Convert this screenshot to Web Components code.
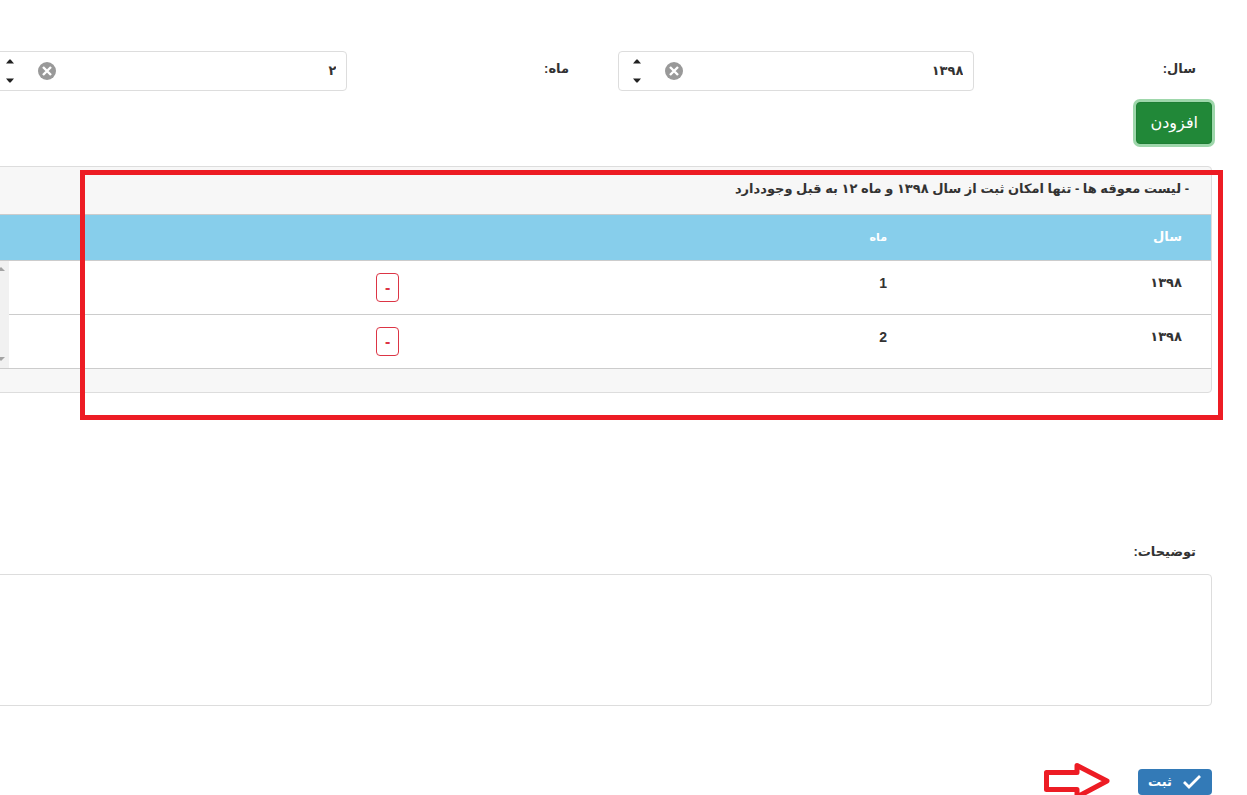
<!DOCTYPE html>
<html lang="fa" dir="rtl">
<head>
<meta charset="utf-8">
<meta name="viewport" content="width=device-width, initial-scale=1">
<title>لیست معوقه ها</title>
<style>
  body {
    margin: 0;
    overflow: hidden;
    background: #fff;
    color: #333;
    font: 700 13px/20px "Liberation Sans", "DejaVu Sans", sans-serif;
  }
</style>
</head>
<body>
<arrears-form></arrears-form>

<script>
class NumberField extends HTMLElement {
  connectedCallback() {
    this.attachShadow({ mode: 'open' });
    const label = this.getAttribute('label') || '';
    const value = this.getAttribute('value') || '';

    this.shadowRoot.innerHTML = `
      <style>
        :host { display: grid; grid-template-columns: 2fr 3fr; }
        label { padding: 8px 16px; }
        .box {
          display: flex;
          align-items: center;
          box-sizing: border-box;
          height: 40px;
          border: 1px solid #ddd;
          border-radius: 4px;
          min-width: 0;
        }
        input {
          flex: 1;
          min-width: 0;
          border: 0;
          outline: 0;
          padding: 0 10px;
          background: none;
          color: inherit;
          font: inherit;
        }
        button { border: 0; padding: 0; background: none; cursor: pointer; display: flex; }
        .clear { margin-inline-end: 24px; }
        .spin { display: flex; flex-direction: column; gap: 14px; margin-inline-end: 14px; }
        svg { display: block; }
      </style>
      <label for="value">${label}</label>
      <div class="box">
        <input id="value" type="text" inputmode="numeric" value="${value}">
        <button class="clear" type="button" aria-label="پاک کردن">
          <svg width="18" height="18" viewBox="0 0 18 18">
            <circle cx="9" cy="9" r="9" fill="#999"/>
            <path d="M5 5l8 8M13 5l-8 8" stroke="#fff" stroke-width="2.4"/>
          </svg>
        </button>
        <div class="spin">
          <button class="up" type="button" aria-label="افزایش">
            <svg width="8" height="5" viewBox="0 0 8 5"><path d="M0 4.5L3.4.5h1.2L8 4.5z" fill="#222"/></svg>
          </button>
          <button class="down" type="button" aria-label="کاهش">
            <svg width="8" height="5" viewBox="0 0 8 5"><path d="M0 .5h8L4.6 4.5H3.4z" fill="#222"/></svg>
          </button>
        </div>
      </div>`;

    const input = this.shadowRoot.querySelector('input');
    const step = n => {
      const latin = input.value.replace(/[۰-۹]/g, d => '۰۱۲۳۴۵۶۷۸۹'.indexOf(d));
      const next = (parseInt(latin, 10) || 0) + n;
      input.value = String(next).replace(/\d/g, d => '۰۱۲۳۴۵۶۷۸۹'[d]);
    };
    this.shadowRoot.querySelector('.clear').addEventListener('click', () => { input.value = ''; });
    this.shadowRoot.querySelector('.up').addEventListener('click', () => step(1));
    this.shadowRoot.querySelector('.down').addEventListener('click', () => step(-1));
  }
}

class ActionButton extends HTMLElement {
  connectedCallback() {
    this.attachShadow({ mode: 'open' });
    this.shadowRoot.innerHTML = `
      <style>
        :host { display: inline-flex; }
        button {
          display: flex;
          align-items: center;
          gap: 10px;
          box-sizing: border-box;
          cursor: pointer;
          font-family: inherit;
          font-size: 16px;
          line-height: 20px;
          color: #fff;
          border-radius: 4px;
        }
        :host([kind="add"]) button {
          height: 42px;
          padding: 0 13px;
          background: #218838;
          border: 1px solid #1e7e34;
          box-shadow: 0 0 0 3px rgba(40, 167, 69, 0.45);
        }
        :host([kind="submit"]) button {
          height: 26px;
          padding: 0 10px;
          font-size: 13px;
          font-weight: 700;
          background: #337ab7;
          border: 0;
        }
        :host([kind="remove"]) button {
          height: 29px;
          padding: 0 8px;
          font-weight: 700;
          color: #dc3545;
          background: #fff;
          border: 1px solid #dc3545;
        }
      </style>
      <button type="button"><slot name="icon"></slot><slot></slot></button>`;
  }
}

class ArrearsTable extends HTMLElement {
  connectedCallback() {
    this.attachShadow({ mode: 'open' });
    const rows = [['۱۳۹۸', '1'], ['۱۳۹۸', '2']];

    this.shadowRoot.innerHTML = `
      <style>
        :host {
          display: block;
          border: 1px solid #ddd;
          border-radius: 4px;
          background: #f7f7f7;
        }
        .title { padding: 12px 22px 15px; }
        table {
          width: 100%;
          border-collapse: collapse;
          table-layout: fixed;
          border-top: 1px solid #ccc;
        }
        th, td { padding: 12px 29px; text-align: start; vertical-align: top; }
        th { background: #87ceeb; color: #fff; border-bottom: 1px solid #ccc; padding-bottom: 13px; }
        td { background: #fff; border-bottom: 1px solid #ccc; }
        td.month { font-size: 14px; }
        th.month { font-size: 11px; }
        .year { width: 237px; }
        .month { width: 40%; box-sizing: border-box; }
        td action-button { display: flex; }
        .bar { width: 17px; padding: 0; }
        td.bar { background: #f1f1f1; }
        .bar div {
          display: flex;
          flex-direction: column;
          align-items: center;
          justify-content: space-between;
          height: 94px;
          padding: 6px 0;
        }
        .foot { height: 23px; }
      </style>
      <div class="title"><slot></slot></div>
      <table>
        <thead>
          <tr>
            <th class="year" scope="col">سال</th>
            <th class="month" scope="col">ماه</th>
            <th></th>
            <th class="bar"></th>
          </tr>
        </thead>
        <tbody>
          ${rows.map(([year, month], i) => `
          <tr>
            <td>${year}</td>
            <td class="month">${month}</td>
            <td><action-button kind="remove">-</action-button></td>
            ${i === 0 ? `<td class="bar" rowspan="${rows.length}"><div>
              <svg width="8" height="4" viewBox="0 0 8 4"><path d="M0 4l4-4 4 4z" fill="#a3a3a3"/></svg>
              <svg width="8" height="4" viewBox="0 0 8 4"><path d="M0 0h8L4 4z" fill="#a3a3a3"/></svg>
            </div></td>` : ''}
          </tr>`).join('')}
        </tbody>
      </table>
      <div class="foot"></div>`;
  }
}

class NoteField extends HTMLElement {
  connectedCallback() {
    this.attachShadow({ mode: 'open' });
    this.shadowRoot.innerHTML = `
      <style>
        :host { display: block; }
        label { display: block; padding: 0 16px 12px; }
        textarea {
          display: block;
          box-sizing: border-box;
          width: 100%;
          height: 132px;
          padding: 8px 10px;
          border: 1px solid #ddd;
          border-radius: 4px;
          resize: none;
          font: inherit;
          color: inherit;
        }
      </style>
      <label for="note">${this.getAttribute('label') || ''}</label>
      <textarea id="note"></textarea>`;
  }
}

// Red frame drawn over whatever is slotted in
class MarkedArea extends HTMLElement {
  connectedCallback() {
    this.attachShadow({ mode: 'open' });
    this.shadowRoot.innerHTML = `
      <style>
        :host { display: block; position: relative; }
        .frame {
          position: absolute;
          inset: 4px -11px -27px 89px;
          border: 5px solid #ed1c24;
          pointer-events: none;
        }
      </style>
      <slot></slot>
      <div class="frame"></div>`;
  }
}

class ArrearsForm extends HTMLElement {
  connectedCallback() {
    this.attachShadow({ mode: 'open' });
    this.shadowRoot.innerHTML = `
      <style>
        :host { display: block; margin-inline: 35px -9px; padding-top: 51px; }
        .fields { display: grid; grid-template-columns: 1fr 1fr; gap: 33px; }
        .add { display: flex; margin: 11px 0 22px; }
        note-field { margin-top: 149px; }
        .actions { display: flex; align-items: center; gap: 28px; height: 26px; margin-top: 63px; }
        svg { display: block; }
      </style>
      <div class="fields">
        <number-field label="سال:" value="۱۳۹۸"></number-field>
        <number-field label="ماه:" value="۲"></number-field>
      </div>
      <div class="add"><action-button kind="add">افزودن</action-button></div>
      <marked-area>
        <arrears-table>- لیست معوقه ها - تنها امکان ثبت از سال ۱۳۹۸ و ماه ۱۲ به قبل وجوددارد</arrears-table>
      </marked-area>
      <note-field label="توضیحات:"></note-field>
      <div class="actions">
        <action-button kind="submit">
          <svg slot="icon" width="20" height="16" viewBox="0 0 20 16"><path d="M2 8l5 5L18 2" fill="none" stroke="#fff" stroke-width="2.8"/></svg>
          ثبت
        </action-button>
        <svg width="66" height="38" viewBox="0 0 66 38">
          <path d="M2.5 9.5H33V2.500L63 18 33 34V26.500H2.500z" fill="#fff" stroke="#ed1c24" stroke-width="5" stroke-linejoin="round"/>
        </svg>
      </div>`;
  }
}

customElements.define('number-field', NumberField);
customElements.define('action-button', ActionButton);
customElements.define('arrears-table', ArrearsTable);
customElements.define('note-field', NoteField);
customElements.define('marked-area', MarkedArea);
customElements.define('arrears-form', ArrearsForm);
</script>
</body>
</html>
